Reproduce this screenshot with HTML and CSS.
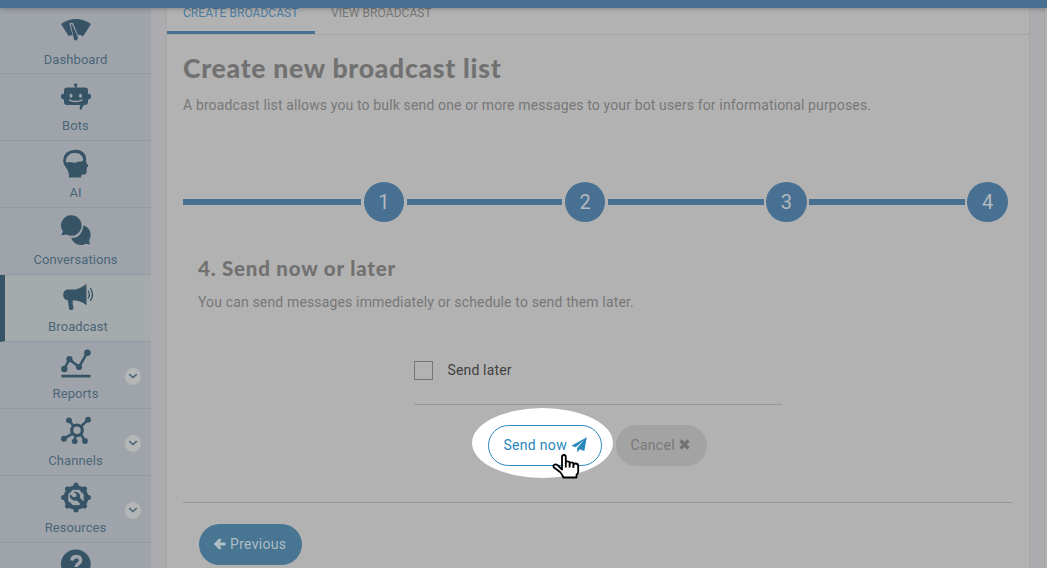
FILE: index.html
```html
<!DOCTYPE html>
<html lang="en">
<head>
<meta charset="utf-8">
<title>Create new broadcast list</title>
<link rel="stylesheet" href="styles.css">
</head>
<body>
<header class="topbar"></header>
<div class="layout">
  <nav class="sidebar">
    <a class="item first">
      <svg class="icon" viewBox="0 0 30 30"><path d="M0 9Q15-1 30 9L22 21.5Q18.500 18.500 17 20.500L12.200 8.500Q10.300 6.800 8.400 8.800L11.800 20.500Q9.500 19.500 8 21.500Z"/><path d="M9.800 9.500Q10.600 8.300 11.300 9.500L17 22.500Q16.500 26.500 13.200 25Z"/></svg>
      <span>Dashboard</span>
    </a>
    <a class="item">
      <svg class="icon" viewBox="0 0 30 30"><path d="M6 5.500h18q3 0 3 3V20q0 3-3 3h-1.200L20 28l-1.500-1 .8-4H6q-3 0-3-3V8.500q0-3 3-3zM3 11.500v6Q0 17.500 0 14.500t3-3zM27 11.500v6q3 0 3-3t-3-3z"/><path class="line thin" d="M14.700 6V3.500"/><circle cx="14.700" cy="3" r="1.700"/><g class="cut"><ellipse cx="10" cy="13.700" rx="1.500" ry="2"/><ellipse cx="19.500" cy="13.700" rx="1.500" ry="2"/></g><path class="cut-line" d="M8 17.800q6.700 3.400 13.400 0"/></svg>
      <span>Bots</span>
    </a>
    <a class="item">
      <svg class="icon" viewBox="0 0 30 30"><path d="M14 .7C21.500.500 25.500 5 25.200 11L25 13l2.300 3.800q.3 1-1.400 1.400l-.4 5.300q-.2 2-2.200 2l-2.800.3-.5 2.700H7.800Q8.600 23 5.200 19 2 15.500 2.100 11.500 2.500 1.500 14 .7z"/><path class="cut" d="M5.300 13.800Q4.200 9.500 7 7 9.500 3.300 14 4q4.500-.5 6.500 2.700 2.300 2 1.500 5-2 1.600-5 .9-2 2-5 .8-3.500-1.200-6.700.4z"/></svg>
      <span>AI</span>
    </a>
    <a class="item">
      <svg class="icon" viewBox="0 0 30 30"><path d="M22.500 9.200a10 10 0 0 1 5.800 14.600q-.4 2.300.9 4.700l-4.500-.8A10 10 0 0 1 10.200 22Q20.500 22.500 22.500 9.200z"/><path d="M10.300-.8a10.300 10.300 0 1 1-4.800 19.400L.3 19.200l1.700-3.700A10.300 10.300 0 0 1 10.300-.8z"/></svg>
      <span>Conversations</span>
    </a>
    <a class="item active">
      <svg class="icon" viewBox="0 0 30 30"><path d="M4 6.500h8Q18 5.500 23.500.7v21.600Q18 17.500 11 17.200L9.500 18l1 8.300q-2 1.200-4.300.3L4.800 17.300Q.2 16.500.2 12T4 6.500z"/><path class="line thin" d="M25 7.500q2.700 4 0 8M27.300 5q4.400 6.500 0 13"/></svg>
      <span>Broadcast</span>
    </a>
    <a class="item">
      <svg class="icon" viewBox="0 0 30 30"><path class="line" d="M3.300 19l5-9.800L18 17l8.300-14.300"/><circle cx="3.300" cy="19" r="3.200"/><circle cx="8.400" cy="9.200" r="3.100"/><circle cx="18" cy="17" r="3.100"/><circle cx="26.400" cy="2.700" r="3.300"/><path class="line round" d="M1.500 26.100h27"/></svg>
      <span>Reports</span>
      <i class="more"><svg viewBox="0 0 10 6"><path d="M1.200 1.200L5 4.500 8.800 1.200"/></svg></i>
    </a>
    <a class="item">
      <svg class="icon" viewBox="0 0 30 30"><path class="line" d="M8 3.300l4.800 6.200M27 2.700l-7 7M3 21.700l8.500-5M13.700 24.300l.7-6M24 24l-4-6.500"/><circle class="line ring" cx="16" cy="13.300" r="5.300"/><circle cx="8" cy="3.300" r="2.900"/><circle cx="27" cy="2.700" r="2.900"/><circle cx="3" cy="21.700" r="3"/><circle cx="13.700" cy="24.300" r="2.800"/><circle cx="24" cy="24" r="2.900"/></svg>
      <span>Channels</span>
      <i class="more"><svg viewBox="0 0 10 6"><path d="M1.200 1.200L5 4.500 8.800 1.200"/></svg></i>
    </a>
    <a class="item">
      <svg class="icon" viewBox="0 0 30 30"><circle class="line gear" cx="15" cy="13.500" r="10.300"/><g class="teeth"><path d="M15 3.500V1M15 23.500V26M5 13.500H2.500M25 13.500h2.500M7.900 6.400L6.500 5M22.100 6.400L23.500 5M7.900 20.600L6.500 22M22.100 20.600l1.400 1.400"/></g><path d="M12.500 7.800q4-.8 6 2.200 1 1.900.4 3.800l4.300 4.300-2.800 2.900-4.600-4.500q-3.400.8-5.600-1.500-1.900-2.300-1.300-5l3.500 3.200 2.700-.5.700-2.200z"/></svg>
      <span>Resources</span>
      <i class="more"><svg viewBox="0 0 10 6"><path d="M1.200 1.200L5 4.500 8.800 1.200"/></svg></i>
    </a>
    <a class="item">
      <svg class="icon" viewBox="0 0 30 30"><circle cx="14.800" cy="13.300" r="14.900"/><path class="cut-line query" d="M10.800 9.500q.7-4 4.500-4 4.300.2 4.300 3.700 0 2-2.300 3.500-2.100 1.300-2.100 3.300M15.200 19v3"/></svg>
    </a>
  </nav>
  <main class="panel">
    <div class="tabs"><a class="tab current">CREATE BROADCAST</a><a class="tab">VIEW BROADCAST</a></div>
    <section class="content">
      <h1>Create new broadcast list</h1>
      <p class="intro">A broadcast list allows you to bulk send one or more messages to your bot users for informational purposes.</p>
      <div class="stepper">
        <i class="bar"></i><b class="dot">1</b><i class="bar"></i><b class="dot">2</b><i class="bar"></i><b class="dot">3</b><i class="bar"></i><b class="dot">4</b>
      </div>
      <div class="step">
        <h2>4. Send now or later</h2>
        <p class="hint">You can send messages immediately or schedule to send them later.</p>
        <div class="form">
          <label class="check"><i class="box"></i><span>Send later</span></label>
          <div class="actions">
            <div class="spot">
              <a class="btn send"><span>Send now</span><svg viewBox="0 0 16 16"><path d="M15.800.3L13.300 14l-4.500-1.800L6.200 15.500V11L13 3.200 4.600 10.300.4 8.700z"/></svg></a>
              <svg class="pointer" viewBox="0 0 28 25"><path d="M10 15.500V3.200Q10 1 11.900 1t1.900 2.200V9q0-1.700 1.800-1.700T17.600 9v1q0-1.700 1.900-1.700T21.400 10v1q0-1.500 1.900-1.500 2.900 0 2.900 2.500v5.500q0 2-1.700 3.500v2.500H11.300Q10.800 21 8 18L2 13.500Q.7 12 2 10.900q1.700-1.200 3.500.2z"/><path d="M13.800 9v4.500M17.600 10v3.500M21.400 11v3"/></svg>
            </div>
            <a class="btn cancel"><span>Cancel</span><svg viewBox="0 0 11 11"><path d="M1.500 1.500l8 8M9.500 1.500l-8 8"/></svg></a>
          </div>
        </div>
      </div>
      <footer class="foot"><a class="btn prev"><svg viewBox="0 0 12 12"><path d="M6.500 1.200L1.700 6l4.800 4.800M2 6h9.500"/></svg><span>Previous</span></a></footer>
    </section>
  </main>
  <div class="edge"></div>
</div>
</body>
</html>
```

FILE: styles.css
```css
* { box-sizing: border-box; }
body { margin: 0; height: 568px; overflow: hidden; background: #acacaf; font-family: Roboto, "Liberation Sans", sans-serif; color: #777; }
h1, h2, p { margin: 0; font-weight: 400; }
.topbar { height: 8px; background: #487092; position: relative; box-shadow: 0 1px 5px rgba(0,0,0,.25); }
.layout { display: flex; height: 560px; overflow: hidden; }
.sidebar { width: 151px; flex: none; background: #9fa4ab; color: #4b6678; }
.item { position: relative; height: 67px; padding-top: 8.500px; border-bottom: 1px solid #949aa3; display: flex; flex-direction: column; align-items: center; font-size: 13px; font-weight: 400; letter-spacing: .08px; }
.item.first { height: 65.500px; padding-top: 7px; }
.item span { line-height: 16px; margin-top: 5.500px; }
.item.first span { margin-top: 6.500px; }
.item.active { background: #a5aaac; border-left: 5px solid #375467; }
.icon { display: block; width: 30px; height: 30px; overflow: visible; fill: #375467; }
.cut { fill: #9fa4ab; }
.cut-line { fill: none; stroke: #9fa4ab; stroke-width: 1.300; }
.query { stroke-width: 3.500; }
.line { fill: none; stroke: #375467; stroke-width: 2.500; }
.thin { stroke-width: 1.300; }
.round { stroke-linecap: round; stroke-width: 2.800; }
.ring { stroke-width: 3.200; }
.gear { stroke-width: 4; }
.teeth { stroke: #375467; stroke-width: 5; stroke-linecap: round; }
.more { position: absolute; right: 10px; top: 26px; width: 16px; height: 17px; border-radius: 50%; background: #b5b6b6; display: flex; align-items: center; justify-content: center; }
.more svg { width: 10px; height: 6px; fill: none; stroke: #48677b; stroke-width: 1.600; }
.panel { width: 864px; flex: none; height: 560px; margin-left: 15px; background: #b2b2b2; border-left: 1px solid #a7a7a8; border-right: 1px solid #a7a7a8; }
.tabs { height: 27px; border-bottom: 1px solid #a5a5a5; display: flex; }
.tab { height: 26px; padding: 0 16px; font-size: 12px; line-height: 11px; letter-spacing: .05px; white-space: nowrap; color: #777; }
.tab.current { width: 148px; color: #4a7da4; border-bottom: 3px solid #487092; }
.content { padding: 0 16px; }
h1 { font: 900 26.500px/34px Lato, sans-serif; letter-spacing: .74px; color: #717171; padding-top: 16px; height: 50px; }
.intro { font-size: 14px; line-height: 20px; margin-top: 10px; letter-spacing: .137px; white-space: nowrap; }
.stepper { display: flex; align-items: center; margin-top: 66px; width: 825px; height: 41px; }
.bar { height: 6px; background: #487092; flex: 1; }
.bar:first-child { flex: 0 0 178px; }
.dot { width: 40.500px; height: 40px; flex: none; margin: 0 2.500px; border-radius: 50%; background: #487092; color: #b2b8bd; text-align: center; font-weight: 400; font-size: 20px; line-height: 41px; }
.dot:last-child { margin-right: 0; }
.step { padding: 33px 15px 0; height: 280px; }
h2 { font: 900 20.500px/26px Lato, sans-serif; color: #717171; letter-spacing: .78px; white-space: nowrap; }
.hint { font-size: 14px; line-height: 20px; margin-top: 11px; letter-spacing: .15px; }
.form { width: 368px; margin: 48px 0 0 215.500px; }
.check { display: flex; align-items: center; height: 45px; padding-bottom: 24px; border-bottom: 1px solid #999; font-size: 14px; color: #414141; letter-spacing: .15px; }
.box { width: 19px; height: 19px; border: 1px solid #767676; margin-right: 15px; }
.actions { display: flex; padding-left: 58px; margin-top: 3px; height: 71px; }
.spot { width: 141px; height: 70px; border-radius: 50%; background: #fff; position: relative; padding: 17px 0 0 16px; }
.btn { display: flex; align-items: center; height: 41px; border-radius: 21px; padding-bottom: 2px; font-size: 14px; letter-spacing: .3px; white-space: nowrap; }
.send { width: 114px; border: 1px solid #2987bd; color: #2987bd; background: #fff; padding-left: 15px; gap: 4px; }
.send svg { width: 16px; height: 16px; fill: #2987bd; }
.pointer { position: absolute; left: 80px; top: 46px; width: 28px; height: 25px; fill: #fff; stroke: #000; stroke-width: 1.800; stroke-linejoin: round; }
.cancel { width: 91px; margin: 17px 0 0 3px; background: #a3a3a3; color: #787878; padding-left: 15px; gap: 4px; }
.cancel svg { width: 11px; height: 11px; fill: none; stroke: #717171; stroke-width: 3.300; }
.foot { border-top: 1px solid #969696; width: 829px; padding: 21px 0 0 16px; }
.prev { width: 103px; background: #477592; color: #afbdc5; padding-left: 15px; gap: 4px; }
.prev svg { width: 12px; height: 12px; fill: none; stroke: #b3bfc6; stroke-width: 2.800; }
.edge { margin-left: 14px; width: 3px; background: #b0b0b1; border-left: 1px solid #a3a3a4; }
```
